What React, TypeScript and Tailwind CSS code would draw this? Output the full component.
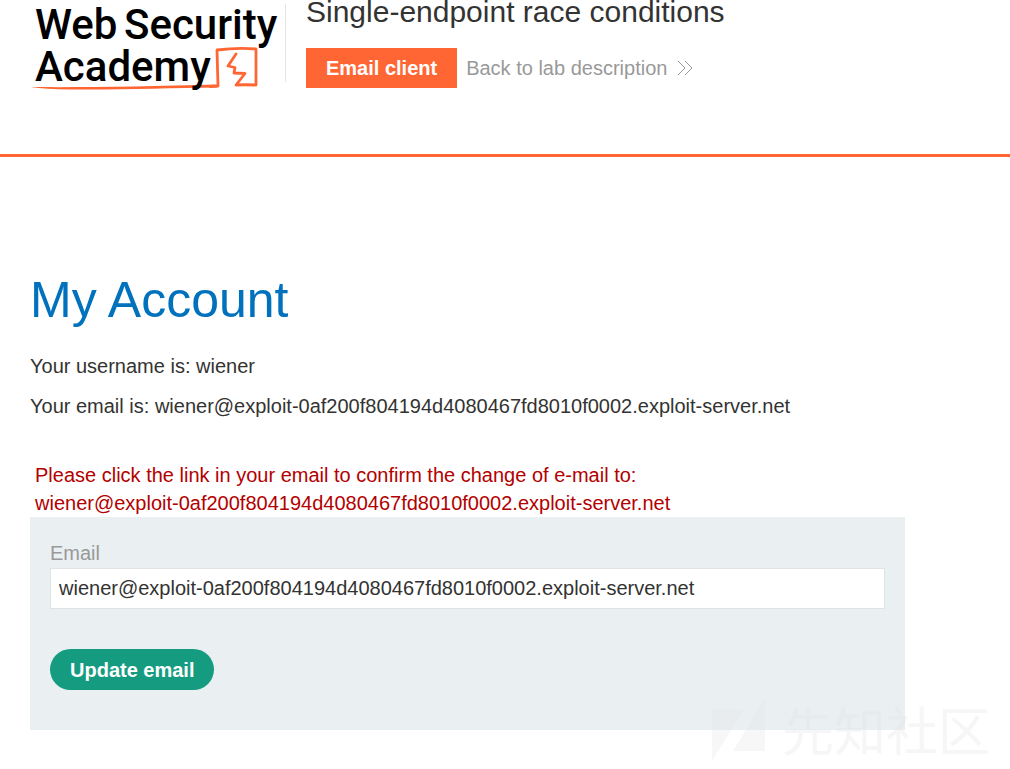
import React from "react";

const EMAIL = "wiener@exploit-0af200f804194d4080467fd8010f0002.exploit-server.net";

function Logo() {
  return (
    <svg width="255" height="96" viewBox="0 0 255 96" role="img" aria-label="Web Security Academy" className="shrink-0">
      <path d="M1 87C50 87.500 120 86.500 187 84.500L187 87.500C140 88 90 90 40 89.500Q15 89 1 87Z" fill="#ff6633" />
      <path
        d="M180 86.500L188 86L187 50Q207 47.500 226 49L226 85Q214 84.500 206 85L215 73.500L204 73L205 67.500L198 66L206 54"
        fill="none"
        stroke="#ff6633"
        strokeWidth="2.800"
        strokeLinejoin="round"
        strokeLinecap="round"
      />
      <g fill="#000" fontFamily="Roboto, 'Liberation Sans', sans-serif" fontWeight="500" fontSize="42">
        <text x="5" y="39">Web</text>
        <text x="94" y="39">Security</text>
        <text x="5" y="81">Academy</text>
      </g>
    </svg>
  );
}

function Watermark() {
  return (
    <div aria-hidden="true" className="pointer-events-none absolute right-5 bottom-[8px] flex items-center gap-4 opacity-30">
      <svg width="54" height="64" viewBox="0 0 54 64" fill="#e6e6e6">
        <path d="M0 12H32L0 64ZM53 2V54H21Z" />
      </svg>
      <span className="font-['Noto_Sans_CJK_SC',sans-serif] text-[52px] leading-16 text-[#e3e3e3]">先知社区</span>
    </div>
  );
}

export default function App() {
  return (
    <div className="relative min-h-screen overflow-hidden bg-white pb-[39px] font-['Liberation_Sans',Arial,sans-serif] text-[20px] leading-7 text-[#333332]">
      <header className="flex items-start border-b-3 border-[#ff6633] px-[30px] pb-[58px]">
        <Logo />
        <div className="mt-1 flex h-[78px] flex-col border-l border-[#e5e5e5] pl-5">
          <h1 className="-mt-3 text-[30px] leading-10">Single-endpoint race conditions</h1>
          <div className="mt-4 flex items-center gap-[9px]">
            <button type="button" className="h-10 shrink-0 bg-[#ff6633] px-5 font-bold text-white">Email client</button>
            <a href="#lab" className="flex items-center gap-[10px] text-[#999]">
              Back to lab description
              <svg width="16" height="16" viewBox="0 0 16 16" fill="none" stroke="#999" aria-hidden="true">
                <path d="M1 1L8 8L1 15M8 1L15 8L8 15" />
              </svg>
            </a>
          </div>
        </div>
      </header>

      <main className="mr-[105px] ml-[30px] pt-[113px]">
        <h2 className="text-[50px] leading-[60px] text-[#0071bc]">My Account</h2>
        <p className="mt-[22px]">Your username is: wiener</p>
        <p className="mt-3">Your email is: {EMAIL}</p>
        <p className="mt-[41px] px-[5px] text-[#b30000]">
          Please click the link in your email to confirm the change of e-mail to:
          <br />
          {EMAIL}
        </p>
        <form className="bg-[#eaeff2] px-5 pt-[22px] pb-10" onSubmit={(e) => e.preventDefault()}>
          <label htmlFor="email" className="block text-[#999]">Email</label>
          <input
            id="email"
            type="email"
            defaultValue={EMAIL}
            className="mt-px block h-[41px] w-full border border-[#e0e3e5] bg-white px-2 outline-none"
          />
          <button type="submit" className="mt-10 block h-[41px] rounded-full bg-[#159c80] px-5 font-bold text-white">
            Update email
          </button>
        </form>
      </main>
      <Watermark />
    </div>
  );
}
